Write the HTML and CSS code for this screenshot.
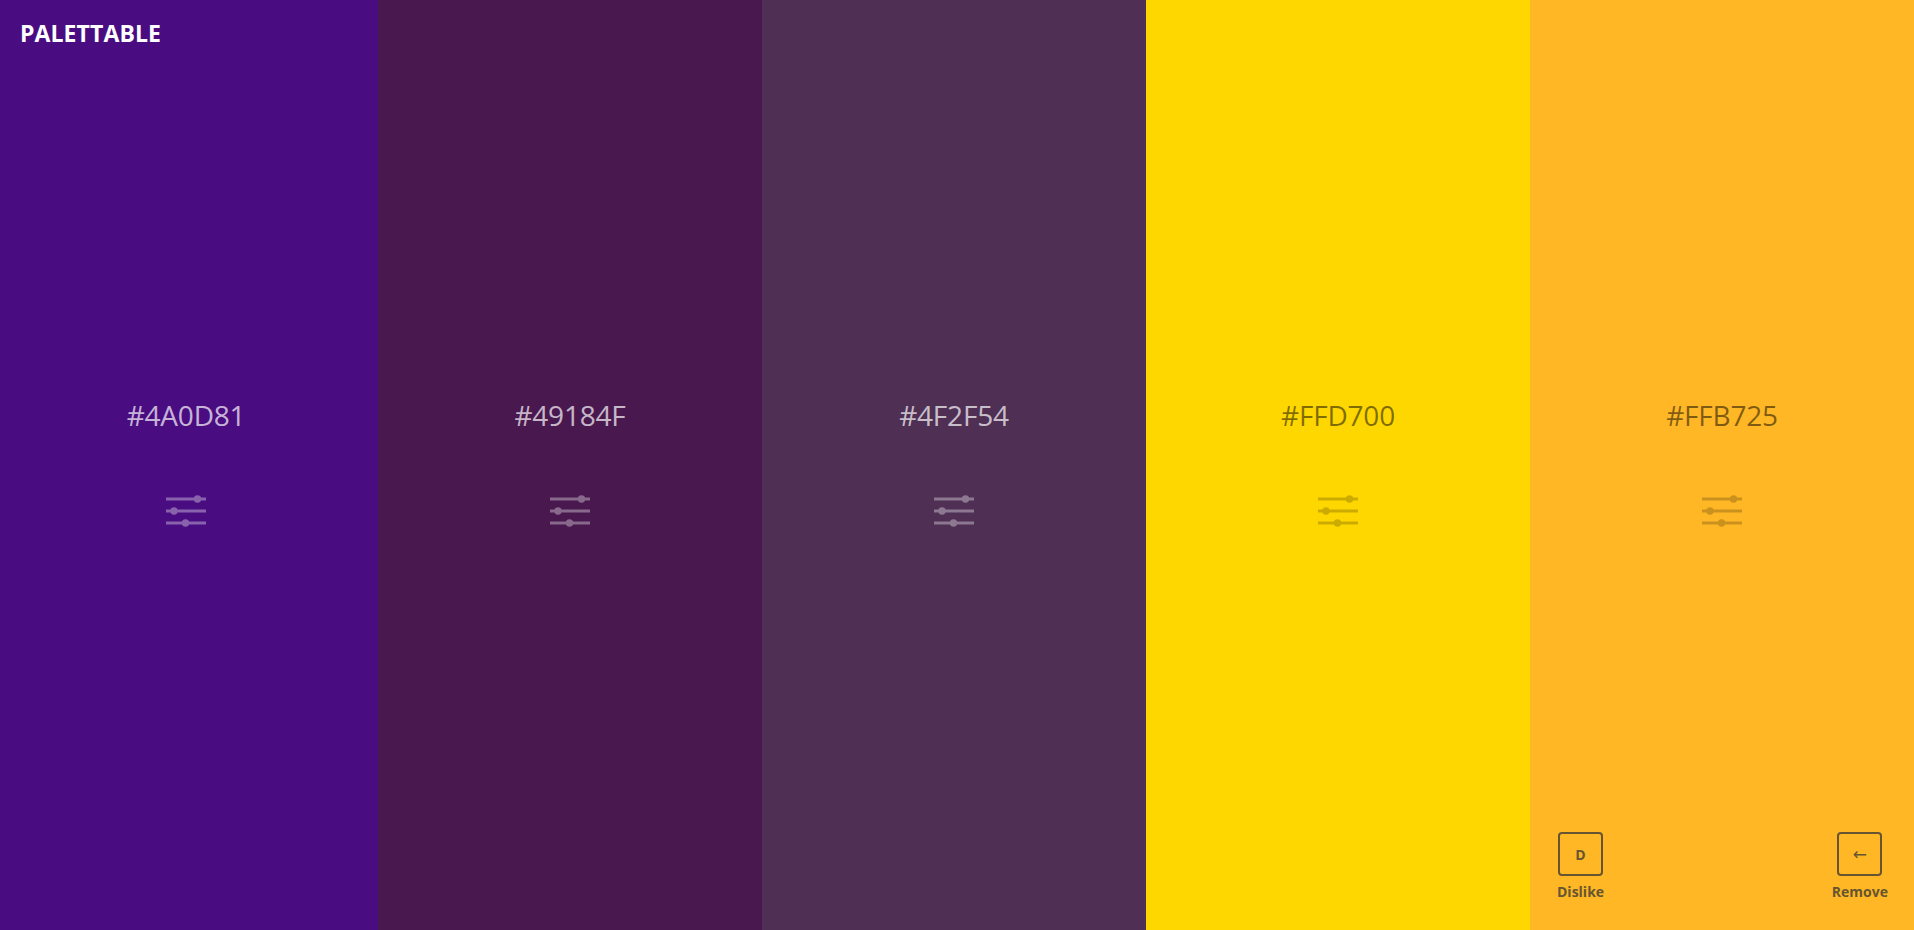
FILE: index.html
```html
<!DOCTYPE html>
<html lang="en">
<head>
<meta charset="utf-8">
<title>Palettable</title>
<link rel="stylesheet" href="styles.css">
</head>
<body>
<div class="palette">
  <div class="swatch light first" style="background:#4A0D81">
    <div class="brand">PALETTABLE</div>
    <div class="main">
      <div class="hex">#4A0D81</div>
      <svg class="adjust" width="40" height="32" viewBox="0 0 40 32"><g stroke="currentColor" stroke-width="3"><line x1="0" y1="4" x2="40" y2="4"/><line x1="0" y1="16" x2="40" y2="16"/><line x1="0" y1="28" x2="40" y2="28"/></g><g fill="currentColor"><circle cx="31.5" cy="4" r="3.7"/><circle cx="8" cy="16" r="3.7"/><circle cx="19.5" cy="28" r="3.7"/></g></svg>
    </div>
  </div>
  <div class="swatch light" style="background:#49184F">
    <div class="main">
      <div class="hex">#49184F</div>
      <svg class="adjust" width="40" height="32" viewBox="0 0 40 32"><g stroke="currentColor" stroke-width="3"><line x1="0" y1="4" x2="40" y2="4"/><line x1="0" y1="16" x2="40" y2="16"/><line x1="0" y1="28" x2="40" y2="28"/></g><g fill="currentColor"><circle cx="31.5" cy="4" r="3.7"/><circle cx="8" cy="16" r="3.7"/><circle cx="19.5" cy="28" r="3.7"/></g></svg>
    </div>
  </div>
  <div class="swatch light" style="background:#4F2F54">
    <div class="main">
      <div class="hex">#4F2F54</div>
      <svg class="adjust" width="40" height="32" viewBox="0 0 40 32"><g stroke="currentColor" stroke-width="3"><line x1="0" y1="4" x2="40" y2="4"/><line x1="0" y1="16" x2="40" y2="16"/><line x1="0" y1="28" x2="40" y2="28"/></g><g fill="currentColor"><circle cx="31.5" cy="4" r="3.7"/><circle cx="8" cy="16" r="3.7"/><circle cx="19.5" cy="28" r="3.7"/></g></svg>
    </div>
  </div>
  <div class="swatch dark" style="background:#FFD700">
    <div class="main">
      <div class="hex">#FFD700</div>
      <svg class="adjust" width="40" height="32" viewBox="0 0 40 32"><g stroke="currentColor" stroke-width="3"><line x1="0" y1="4" x2="40" y2="4"/><line x1="0" y1="16" x2="40" y2="16"/><line x1="0" y1="28" x2="40" y2="28"/></g><g fill="currentColor"><circle cx="31.5" cy="4" r="3.7"/><circle cx="8" cy="16" r="3.7"/><circle cx="19.5" cy="28" r="3.7"/></g></svg>
    </div>
  </div>
  <div class="swatch dark" style="background:#FFB725">
    <div class="main">
      <div class="hex">#FFB725</div>
      <svg class="adjust" width="40" height="32" viewBox="0 0 40 32"><g stroke="currentColor" stroke-width="3"><line x1="0" y1="4" x2="40" y2="4"/><line x1="0" y1="16" x2="40" y2="16"/><line x1="0" y1="28" x2="40" y2="28"/></g><g fill="currentColor"><circle cx="31.5" cy="4" r="3.7"/><circle cx="8" cy="16" r="3.7"/><circle cx="19.5" cy="28" r="3.7"/></g></svg>
    </div>
    <div class="actions">
      <div class="action">
        <div class="key">D</div>
        <div class="label">Dislike</div>
      </div>
      <div class="action">
        <div class="key arrow">&#8592;</div>
        <div class="label">Remove</div>
      </div>
    </div>
  </div>
</div>
</body>
</html>
```
FILE: styles.css
```css
* { box-sizing: border-box; }
html, body {
  margin: 0;
  padding: 0;
  height: 100%;
  overflow: hidden;
}
body {
  font-family: "Open Sans", "Noto Sans", sans-serif;
}
.palette {
  display: grid;
  grid-template-columns: 378px repeat(4, 1fr);
  height: 930px;
}
.swatch {
  display: grid;
  grid-template-areas: "stack";
  height: 930px;
}
.swatch > * { grid-area: stack; }
.light { color: rgba(255,255,255,0.7); }
.light .adjust { color: #fff; opacity: 0.35; }
.dark { color: rgba(0,0,0,0.5); }
.dark .adjust { color: #000; opacity: 0.2; }

.brand {
  align-self: start;
  justify-self: start;
  margin: 16px 0 0 20px;
  font-family: "Open Sans", sans-serif;
  font-weight: 700;
  font-size: 23px;
  line-height: 34px;
  color: #fff;
  letter-spacing: 0.1px;
}
.main {
  display: flex;
  flex-direction: column;
  align-items: center;
  justify-content: center;
  gap: 60px;
  padding-bottom: 8px;
}
.first .main { padding-right: 6px; }
.hex {
  font-size: 28px;
  line-height: 40px;
  letter-spacing: -0.2px;
}
.adjust { display: block; }

.actions {
  align-self: end;
  display: flex;
  justify-content: space-between;
  align-items: flex-start;
  padding: 0 26px 29px 27px;
  color: #665530;
}
.action {
  display: flex;
  flex-direction: column;
  align-items: center;
  gap: 7px;
}
.key {
  width: 45px;
  height: 44px;
  border: 2px solid #665530;
  border-radius: 4px;
  display: flex;
  align-items: center;
  justify-content: center;
  font-weight: 700;
  font-size: 14px;
}
.key.arrow {
  font-family: "DejaVu Sans", sans-serif;
  font-weight: 400;
  font-size: 17px;
}
.label {
  font-weight: 700;
  font-size: 14px;
  line-height: 18px;
}
```
